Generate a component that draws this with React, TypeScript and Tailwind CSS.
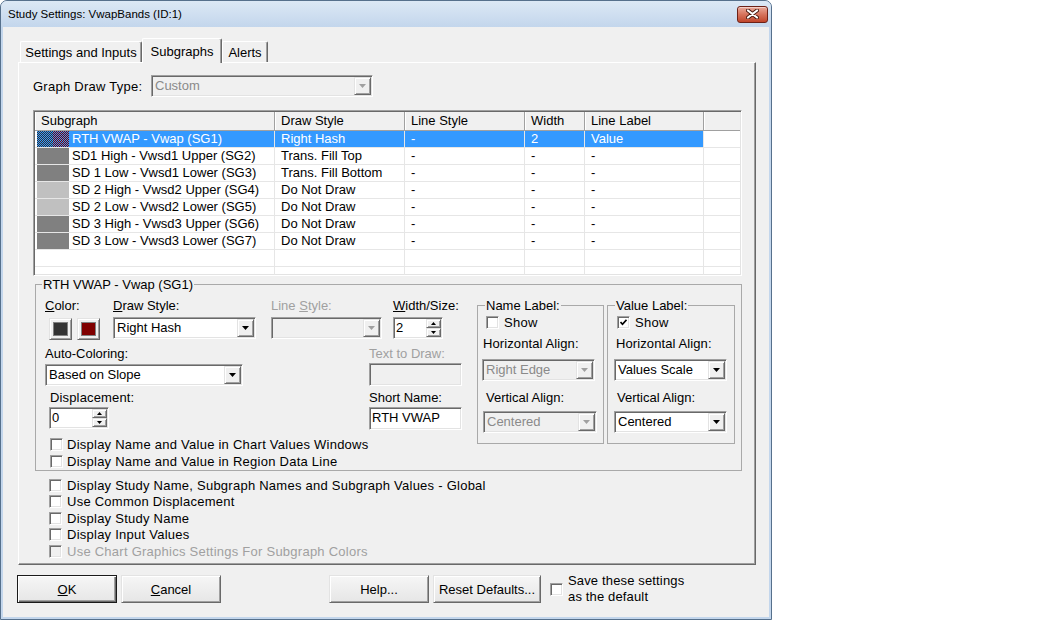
import React from 'react'

const font = "font-['Liberation_Sans',Arial,sans-serif]"

// classic 3D edges
const sunken =
  'border border-t-[#a0a0a0] border-l-[#a0a0a0] border-r-white border-b-white shadow-[inset_1px_1px_0_#696969,inset_-1px_-1px_0_#e3e3e3]'
const raised =
  'border border-t-[#e3e3e3] border-l-[#e3e3e3] border-r-[#696969] border-b-[#696969] shadow-[inset_1px_1px_0_#ffffff,inset_-1px_-1px_0_#a0a0a0]'

function Tri({ up, off, w = 7 }: { up?: boolean; off?: boolean; w?: number }) {
  const h = Math.ceil(w / 2)
  const d = up ? `M0 ${h}H${w}L${w / 2} 0Z` : `M0 0H${w}L${w / 2} ${h}Z`
  return (
    <svg width={w} height={h} viewBox={`0 0 ${w} ${h}`} className={off ? 'fill-[#a0a0a0]' : 'fill-black'}>
      <path d={d} />
    </svg>
  )
}

function Combo({ value = '', off, className = '' }: { value?: string; off?: boolean; className?: string }) {
  return (
    <div className={`${sunken} ${off ? 'bg-[#f0f0f0] text-[#8a8a8a]' : 'bg-white'} flex h-[22px] p-px ${className}`}>
      <span className="flex-1 pl-[2px] leading-[18px] whitespace-nowrap overflow-hidden">{value}</span>
      <span className={`${raised} w-[17px] flex items-center justify-center bg-[#f0f0f0]`}>
        <Tri off={off} />
      </span>
    </div>
  )
}

function Spin({ value, className = '' }: { value: string; className?: string }) {
  return (
    <div className={`${sunken} bg-white flex h-[22px] p-px ${className}`}>
      <span className="flex-1 pl-px leading-[18px]">{value}</span>
      <span className="flex flex-col w-[15px]">
        <span className={`${raised} flex-1 flex items-center justify-center bg-[#f0f0f0]`}>
          <Tri up w={5} />
        </span>
        <span className={`${raised} flex-1 flex items-center justify-center bg-[#f0f0f0]`}>
          <Tri w={5} />
        </span>
      </span>
    </div>
  )
}

function Check({
  label,
  on,
  off,
  tight,
  className = '',
}: {
  label: string
  on?: boolean
  off?: boolean
  tight?: boolean
  className?: string
}) {
  return (
    <div className={`flex items-center ${tight ? 'gap-[4px]' : 'gap-[5px]'} ${className}`}>
      <span className={`${sunken} w-[13px] h-[13px] shrink-0 flex items-center justify-center ${off ? 'bg-[#f0f0f0]' : 'bg-white'}`}>
        {on && (
          <svg width="7" height="7" viewBox="0 0 7 7">
            <path d="M0.5 3l2 2.2L6.5 0.8" stroke="black" strokeWidth="1.7" fill="none" />
          </svg>
        )}
      </span>
      <span className={`whitespace-nowrap tracking-[0.25px] ${off ? 'text-[#a0a0a0]' : ''}`}>{label}</span>
    </div>
  )
}

function Btn({ children, className = '', def }: { children: React.ReactNode; className?: string; def?: boolean }) {
  return (
    <div
      className={`h-[28px] flex items-center justify-center bg-linear-to-b from-[#f6f6f6] to-[#e6e6e6] ${
        def
          ? 'border border-[#1a1a1a] shadow-[inset_1px_1px_0_#ffffff,inset_-1px_-1px_0_#696969,inset_-2px_-2px_0_#a0a0a0]'
          : raised
      } ${className}`}
    >
      {children}
    </div>
  )
}

function Tab({ children, sel, className = '' }: { children: React.ReactNode; sel?: boolean; className?: string }) {
  return (
    <div
      className={`flex items-center justify-center border border-b-0 border-t-white border-l-white border-r-[#696969] rounded-t-[2px] bg-[#f0f0f0] shadow-[inset_-1px_0_0_#a0a0a0] ${
        sel ? 'relative z-10 -mb-px h-[25px]' : 'h-[21px]'
      } ${className}`}
    >
      {children}
    </div>
  )
}

const colW = ['w-[240px]', 'w-[130px]', 'w-[120px]', 'w-[60px]', 'w-[119px]']
const heads = ['Subgraph', 'Draw Style', 'Line Style', 'Width', 'Line Label']

type Row = { name: string; style: string; sw: 'sel' | 'dark' | 'light'; w?: string; label?: string }
const rows: Row[] = [
  { name: 'RTH VWAP - Vwap (SG1)', style: 'Right Hash', sw: 'sel', w: '2', label: 'Value' },
  { name: 'SD1 High - Vwsd1 Upper (SG2)', style: 'Trans. Fill Top', sw: 'dark' },
  { name: 'SD 1 Low - Vwsd1 Lower (SG3)', style: 'Trans. Fill Bottom', sw: 'dark' },
  { name: 'SD 2 High - Vwsd2 Upper (SG4)', style: 'Do Not Draw', sw: 'light' },
  { name: 'SD 2 Low - Vwsd2 Lower (SG5)', style: 'Do Not Draw', sw: 'light' },
  { name: 'SD 3 High - Vwsd3 Upper (SG6)', style: 'Do Not Draw', sw: 'dark' },
  { name: 'SD 3 Low - Vwsd3 Lower (SG7)', style: 'Do Not Draw', sw: 'dark' },
]

function Swatch({ kind }: { kind: Row['sw'] }) {
  if (kind === 'sel')
    return (
      <div className="ml-[2px] w-[32px] h-[16px] flex shrink-0">
        <div className="w-[16px] bg-[repeating-conic-gradient(#333333_0_25%,#3399ff_0_50%)] bg-size-[2px_2px]" />
        <div className="w-[16px] bg-[repeating-conic-gradient(#800000_0_25%,#3399ff_0_50%)] bg-size-[2px_2px]" />
      </div>
    )
  return <div className={`ml-[2px] w-[32px] h-[16px] shrink-0 ${kind === 'dark' ? 'bg-[#808080]' : 'bg-[#c0c0c0]'}`} />
}

function Table() {
  const cell = 'border-r border-[#e6e6e6] pl-[6px] leading-[16px] whitespace-nowrap overflow-hidden'
  return (
    <div className={`${sunken} ml-[14px] mt-[13px] w-[709px] h-[166px] p-px bg-white flex flex-col overflow-hidden`}>
      <div className="flex h-[19px] shrink-0 bg-[#f0f0f0] border-b border-[#a0a0a0]">
        {heads.map((h, i) => (
          <div key={h} className={`${colW[i]} border-r border-[#a0a0a0] shadow-[inset_1px_0_0_#ffffff] pl-[6px] leading-[18px]`}>
            {h}
          </div>
        ))}
        <div className="flex-1 shadow-[inset_1px_0_0_#ffffff]" />
      </div>
      {rows.map(r => {
        const s = r.sw === 'sel'
        const hl = s ? 'bg-[#3399ff] text-white' : ''
        return (
          <div key={r.name} className="flex h-[17px] shrink-0 border-b border-[#e6e6e6]">
            <div className={`${colW[0]} flex border-r border-[#e6e6e6]`}>
              <Swatch kind={r.sw} />
              <div className={`flex-1 pl-[3px] leading-[16px] whitespace-nowrap ${hl}`}>{r.name}</div>
            </div>
            <div className={`${colW[1]} ${cell} ${hl}`}>{r.style}</div>
            <div className={`${colW[2]} ${cell} ${hl}`}>-</div>
            <div className={`${colW[3]} ${cell} ${hl}`}>{r.w ?? '-'}</div>
            <div className={`${colW[4]} ${cell} ${hl}`}>{r.label ?? '-'}</div>
            <div className="flex-1" />
          </div>
        )
      })}
      {[0, 1].map(i => (
        <div key={i} className="flex h-[17px] shrink-0 border-b border-[#e6e6e6]">
          {colW.map(w => (
            <div key={w} className={`${w} border-r border-[#e6e6e6]`} />
          ))}
          <div className="flex-1" />
        </div>
      ))}
    </div>
  )
}

function ColorBtn({ color }: { color: string }) {
  return (
    <div className={`${raised} w-[23px] h-[22px] p-[3px] bg-[#f0f0f0]`}>
      <div className={`w-full h-full border border-[#808080] ${color}`} />
    </div>
  )
}

function SubgraphGroup() {
  return (
    <fieldset className="mt-px ml-[16px] w-[707px] h-[194px] border border-[#a9a9a9]">
      <legend className="ml-[6px] px-px leading-[15px]">RTH VWAP - Vwap (SG1)</legend>
      <div className="flex pt-[6px]">
        <div className="w-[441px] pl-[9px] flex flex-col">
          <div className="flex">
            <div className="w-[68px]">
              <div>
                <u className="underline">C</u>olor:
              </div>
              <div className="flex gap-[5px] ml-[4px] mt-[5px]">
                <ColorBtn color="bg-[#333333]" />
                <ColorBtn color="bg-[#800000]" />
              </div>
            </div>
            <div className="w-[158px]">
              <div>
                <u className="underline">D</u>raw Style:
              </div>
              <Combo value="Right Hash" className="w-[143px] mt-[4px]" />
            </div>
            <div className="w-[122px]">
              <div className="text-[#a0a0a0]">
                Line <u className="underline">S</u>tyle:
              </div>
              <Combo off className="w-[111px] mt-[4px]" />
            </div>
            <div>
              <div>
                <u className="underline">W</u>idth/Size:
              </div>
              <Spin value="2" className="w-[50px] mt-[4px]" />
            </div>
          </div>

          <div className="flex mt-[6px]">
            <div className="w-[324px]">
              <div>Auto-Coloring:</div>
              <Combo value="Based on Slope" className="w-[198px] mt-[3px]" />
            </div>
            <div>
              <div className="text-[#a0a0a0]">Text to Draw:</div>
              <div className={`${sunken} w-[93px] h-[23px] mt-[2px] bg-[#f0f0f0]`} />
            </div>
          </div>

          <div className="flex mt-[4px]">
            <div className="w-[324px]">
              <div className="ml-[5px] tracking-[0.15px]">Displacement:</div>
              <Spin value="0" className="w-[60px] ml-[4px] mt-[2px]" />
            </div>
            <div>
              <div>Short Name:</div>
              <div className={`${sunken} w-[93px] h-[23px] mt-[2px] bg-white pl-[2px] leading-[20px]`}>RTH VWAP</div>
            </div>
          </div>

          <div className="mt-[6px] ml-[5px] flex flex-col">
            <Check tight label="Display Name and Value in Chart Values Windows" className="h-[17px]" />
            <Check tight label="Display Name and Value in Region Data Line" className="h-[17px]" />
          </div>
        </div>

        <fieldset className="w-[127px] h-[146px] border border-[#a9a9a9]">
          <legend className="ml-[7px] px-px leading-[15px]">Name Label:</legend>
          <Check label="Show" className="ml-[8px] mt-[2px] h-[15px]" />
          <div className="ml-[5px] mt-[6px] tracking-[0.1px]">Horizontal Align:</div>
          <Combo off value="Right Edge" className="ml-[4px] mt-[8px] w-[113px]" />
          <div className="ml-[8px] mt-[9px]">Vertical Align:</div>
          <Combo off value="Centered" className="ml-[5px] mt-[6px] w-[114px]" />
        </fieldset>

        <fieldset className="ml-[3px] w-[128px] h-[146px] border border-[#a9a9a9]">
          <legend className="ml-[7px] px-px leading-[15px]">Value Label:</legend>
          <Check label="Show" on className="ml-[9px] mt-[2px] h-[15px]" />
          <div className="ml-[8px] mt-[6px] tracking-[0.1px]">Horizontal Align:</div>
          <Combo value="Values Scale" className="ml-[6px] mt-[8px] w-[113px]" />
          <div className="ml-[9px] mt-[9px]">Vertical Align:</div>
          <Combo value="Centered" className="ml-[6px] mt-[6px] w-[113px]" />
        </fieldset>
      </div>
    </fieldset>
  )
}

function CloseBtn() {
  return (
    <div className="mr-[3px] w-[31px] h-[17px] rounded-[3px] border border-[#6d2117] bg-linear-to-b from-[#e9a99a] via-[#d6735c] to-[#c0452b] shadow-[inset_0_1px_0_#f4cfc6] flex items-center justify-center">
      <svg width="13" height="10" viewBox="0 0 13 10">
        <path d="M2 1.5l9 7M11 1.5l-9 7" stroke="#4a1a12" strokeWidth="4" strokeLinecap="round" />
        <path d="M2 1.5l9 7M11 1.5l-9 7" stroke="#ffffff" strokeWidth="2.2" strokeLinecap="round" />
      </svg>
    </div>
  )
}

export default function App() {
  return (
    <div className={`w-[1039px] h-[620px] bg-white text-[13px] leading-[15px] text-black ${font}`}>
      <div className="w-[772px] h-[620px] flex flex-col rounded-t-[7px] overflow-hidden border border-[#56708c] bg-[#c3d6ec]">
        <div className="h-[26px] shrink-0 flex items-center bg-linear-to-b from-[#dce8f5] to-[#c3d6ec]">
          <span className="ml-[7px] flex-1 text-[11.5px]">Study Settings: VwapBands (ID:1)</span>
          <CloseBtn />
        </div>

        <div className="flex-1 mx-[2px] mb-[2px] bg-[#f0f0f0] flex flex-col">
          <div className="ml-[17px] mt-[11px] h-[24px] flex items-end">
            <Tab className="w-[122px]">Settings and Inputs</Tab>
            <Tab sel className="w-[80px]">
              Subgraphs
            </Tab>
            <Tab className="w-[46px]">Alerts</Tab>
          </div>

          <div className="ml-[15px] w-[738px] h-[503px] shrink-0 flex flex-col border border-t-white border-l-white border-r-[#696969] border-b-[#696969] shadow-[inset_-1px_-1px_0_#a0a0a0]">
            <div className="mt-[12px] h-[22px] flex items-center">
              <span className="ml-[14px] w-[118px] tracking-[0.25px]">Graph Draw Type:</span>
              <Combo value="Custom" off className="w-[222px]" />
            </div>

            <Table />
            <SubgraphGroup />

            <div className="mt-[6px] ml-[30px] flex flex-col">
              <Check label="Display Study Name, Subgraph Names and Subgraph Values - Global" className="h-[16.5px]" />
              <Check label="Use Common Displacement" className="h-[16.5px]" />
              <Check label="Display Study Name" className="h-[16.5px]" />
              <Check label="Display Input Values" className="h-[16.5px]" />
              <Check label="Use Chart Graphics Settings For Subgraph Colors" off className="h-[16.5px]" />
            </div>
          </div>

          <div className="mt-[10px] ml-[14px] h-[28px] flex items-center">
            <Btn def className="w-[100px]">
              <u className="underline">O</u>K
            </Btn>
            <Btn className="ml-[4px] w-[100px]">
              <u className="underline">C</u>ancel
            </Btn>
            <Btn className="ml-[108px] w-[100px]">Help...</Btn>
            <Btn className="ml-[4px] w-[108px]">Reset Defaults...</Btn>
            <span className={`${sunken} ml-[9px] w-[13px] h-[13px] bg-white`} />
            <div className="ml-[5px] leading-[16px] tracking-[0.15px]">
              Save these settings
              <br />
              as the default
            </div>
          </div>
        </div>
      </div>
    </div>
  )
}
